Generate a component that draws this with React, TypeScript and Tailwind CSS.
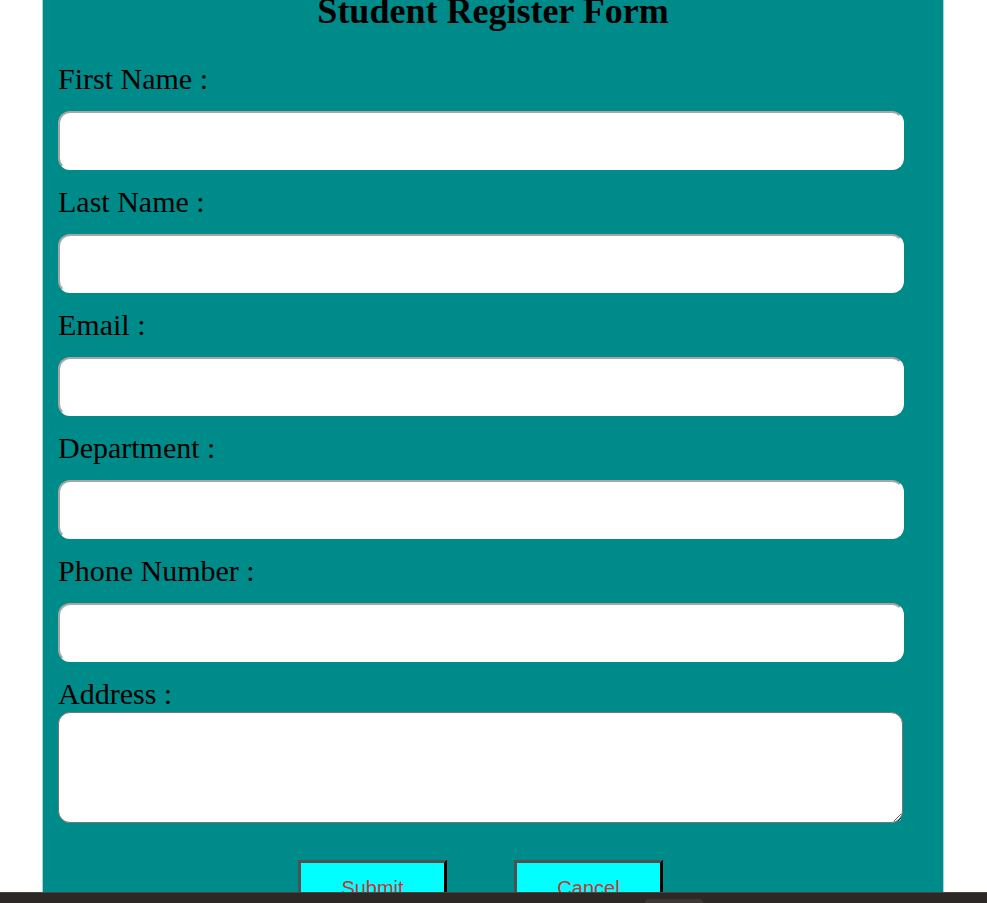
import React from "react";

const serif = { fontFamily: '"Liberation Serif", "Times New Roman", serif' };

function Field({ label, first }: { label: string; first?: boolean }) {
  return (
    <div className={first ? "mt-[31px]" : "mt-[15px]"}>
      <div className="text-[30px] leading-[34px] text-black">{label}</div>
      <input
        type="text"
        className="mt-[15px] block h-[59px] w-[846px] rounded-[12px] border-2 border-solid border-t-[#a6a6a6] border-l-[#a6a6a6] border-r-white border-b-white bg-white outline-none"
      />
    </div>
  );
}

export default function App() {
  return (
    <div className="flex h-[903px] flex-col overflow-hidden bg-white" style={serif}>
      <div className="h-[892px] overflow-hidden">
        <div className="-mt-[9px] ml-[42px] w-[902px] border-x border-[#9fd6e2] bg-[#008b8b] pb-[40px]">
          <h1 className="text-center text-[36px] font-bold leading-[40px] text-black">
            Student Register Form
          </h1>
          <div className="pl-[15px]">
            <Field label="First Name :" first />
            <Field label="Last Name :" />
            <Field label="Email :" />
            <Field label="Department :" />
            <Field label="Phone Number :" />
            <div className="mt-[15px]">
              <div className="text-[30px] leading-[34px] text-black">Address :</div>
              <textarea className="mt-[1px] block h-[111px] w-[845px] rounded-[12px] border border-solid border-[#767676] bg-white outline-none" />
            </div>
          </div>
          <div className="mt-[37px] flex gap-[67px] pl-[255px]">
            <button
              className="h-[56px] w-[149px] border-[3px] border-solid border-t-[#505050] border-l-[#505050] border-r-black border-b-black bg-[#00ffff] text-[20px] text-[#cc3333]"
              style={{ fontFamily: '"Liberation Sans", Arial, sans-serif' }}
            >
              Submit
            </button>
            <button
              className="h-[56px] w-[149px] border-[3px] border-solid border-t-[#505050] border-l-[#505050] border-r-black border-b-black bg-[#00ffff] text-[20px] text-[#cc3333]"
              style={{ fontFamily: '"Liberation Sans", Arial, sans-serif' }}
            >
              Cancel
            </button>
          </div>
        </div>
      </div>
      <div className="flex h-[11px] items-end border-t border-[#4b4541] bg-[#2c2825] pl-[645px]">
        <div className="h-[4px] w-[58px] rounded-t-[6px] bg-[#3d3835]" />
      </div>
    </div>
  );
}
